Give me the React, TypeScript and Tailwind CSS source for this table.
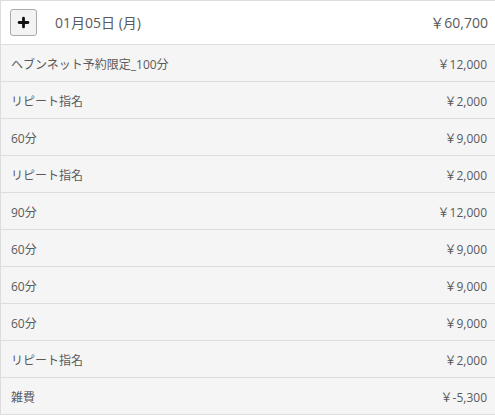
import { Plus } from "lucide-react";

const items = [
  { name: "ヘブンネット予約限定_100分", price: "￥12,000" },
  { name: "リピート指名", price: "￥2,000" },
  { name: "60分", price: "￥9,000" },
  { name: "リピート指名", price: "￥2,000" },
  { name: "90分", price: "￥12,000" },
  { name: "60分", price: "￥9,000" },
  { name: "60分", price: "￥9,000" },
  { name: "60分", price: "￥9,000" },
  { name: "リピート指名", price: "￥2,000" },
  { name: "雑費", price: "￥-5,300" },
];

export default function App() {
  return (
    <div
      className="w-[496px] bg-white text-[#5a5a5a]"
      style={{ fontFamily: '"Open Sans", "Noto Sans CJK JP", sans-serif' }}
    >
      <div className="border-l border-t border-[#ddd]">
        {/* header */}
        <div className="h-[44px] flex items-center justify-between pl-[9px] pr-[8px] border-b border-[#ddd]">
          <div className="flex items-center gap-[18px]">
            <button className="w-[27px] h-[27px] flex items-center justify-center rounded-[3px] border border-[#aaa] bg-[#f3f3f3]">
              <Plus size={15} strokeWidth={4.5} color="#111" />
            </button>
            <span className="text-[14px]">01月05日 (月)</span>
          </div>
          <span className="text-[14px]">￥60,700</span>
        </div>

        {/* line items */}
        {items.map((it, i) => (
          <div
            key={i}
            className="h-[37px] flex items-center justify-between pt-[3px] pl-[10px] pr-[9px] bg-[#f5f5f5] border-b border-[#ddd] text-[12px]"
          >
            <span>{it.name}</span>
            <span>{it.price}</span>
          </div>
        ))}
      </div>
    </div>
  );
}
